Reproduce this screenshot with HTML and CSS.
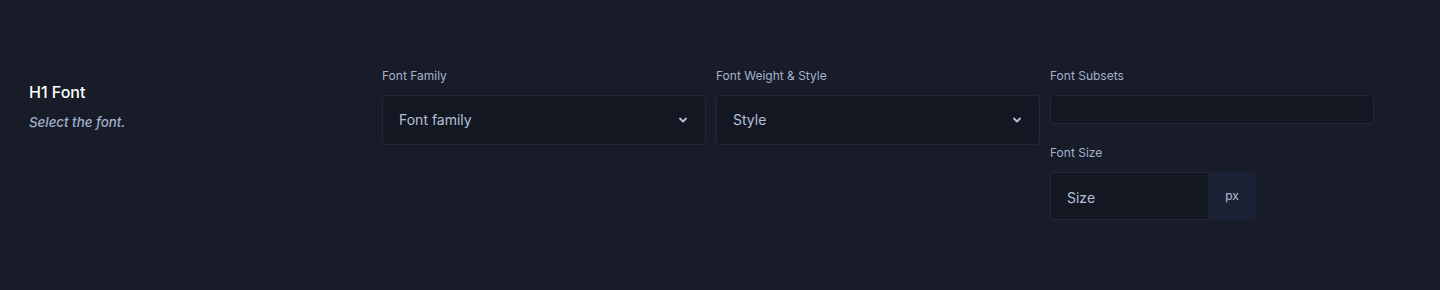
FILE: index.html
```html
<!DOCTYPE html>
<html>
<head>
<meta charset="utf-8">
<link rel="stylesheet" href="styles.css">
</head>
<body>
<div class="row">
  <div class="info">
    <div class="title">H1 Font</div>
    <div class="desc">Select the font.</div>
  </div>
  <div class="fields">
    <div class="field">
      <label class="label">Font Family</label>
      <div class="select"><span>Font family</span>
        <svg class="chev" width="10" height="10" viewBox="0 0 10 10"><path d="M2 3.5 L5 6.5 L8 3.5" fill="none" stroke="currentColor" stroke-width="1.8" stroke-linecap="round" stroke-linejoin="round"/></svg>
      </div>
    </div>
    <div class="field">
      <label class="label">Font Weight &amp; Style</label>
      <div class="select"><span>Style</span>
        <svg class="chev" width="10" height="10" viewBox="0 0 10 10"><path d="M2 3.5 L5 6.5 L8 3.5" fill="none" stroke="currentColor" stroke-width="1.8" stroke-linecap="round" stroke-linejoin="round"/></svg>
      </div>
    </div>
    <div class="field">
      <label class="label">Font Subsets</label>
      <div class="subsets"></div>
      <label class="label size-label">Font Size</label>
      <div class="size">
        <div class="size-input">Size</div>
        <div class="addon">px</div>
      </div>
    </div>
  </div>
</div>
</body>
</html>
```

FILE: styles.css
```css
html, body {
  margin: 0;
  padding: 0;
  background: #171c28;
  font-family: Inter, "Noto Sans", sans-serif;
  height: 290px;
}
.row {
  display: flex;
  padding: 67px 0 0 29px;
}
.info {
  width: 353px;
  flex: none;
  padding-top: 14px;
}
.title {
  color: #ffffff;
  font-size: 16px;
  font-weight: 500;
  line-height: 22px;
}
.desc {
  margin-top: 10px;
  color: #a3b1cc;
  font-size: 13.3px;
  font-weight: 500;
  font-style: italic;
  line-height: 18px;
}
.fields {
  display: grid;
  grid-template-columns: repeat(3, 324px);
  column-gap: 10px;
}
.field {
  display: flex;
  flex-direction: column;
}
.label {
  color: #a3b1cc;
  font-size: 12px;
  line-height: 18px;
  margin-bottom: 10px;
}
.select {
  box-sizing: border-box;
  height: 50px;
  background: #131722;
  border: 1px solid #222838;
  border-radius: 4px;
  display: flex;
  align-items: center;
  justify-content: space-between;
  padding: 0 17px 1px 16px;
  color: #b4c0d8;
  font-size: 14px;
}
.chev {
  color: #b4c0d8;
}
.subsets {
  box-sizing: border-box;
  height: 29px;
  background: #131722;
  border: 1px solid #222838;
  border-radius: 4px;
}
.size-label {
  margin-top: 20px;
  margin-bottom: 10px;
}
.size {
  display: flex;
  height: 48px;
  width: 206px;
}
.size-input {
  box-sizing: border-box;
  width: 158px;
  background: #131722;
  border: 1px solid #222838;
  border-right: none;
  border-radius: 4px 0 0 4px;
  display: flex;
  align-items: center;
  padding: 2px 0 0 16px;
  color: #b4c0d8;
  font-size: 14px;
}
.addon {
  flex: 1;
  background: #1c2236;
  border-radius: 0 4px 4px 0;
  display: flex;
  align-items: center;
  justify-content: center;
  color: #b4c0d8;
  font-size: 12px;
  padding-bottom: 2px;
  box-sizing: border-box;
}
```
